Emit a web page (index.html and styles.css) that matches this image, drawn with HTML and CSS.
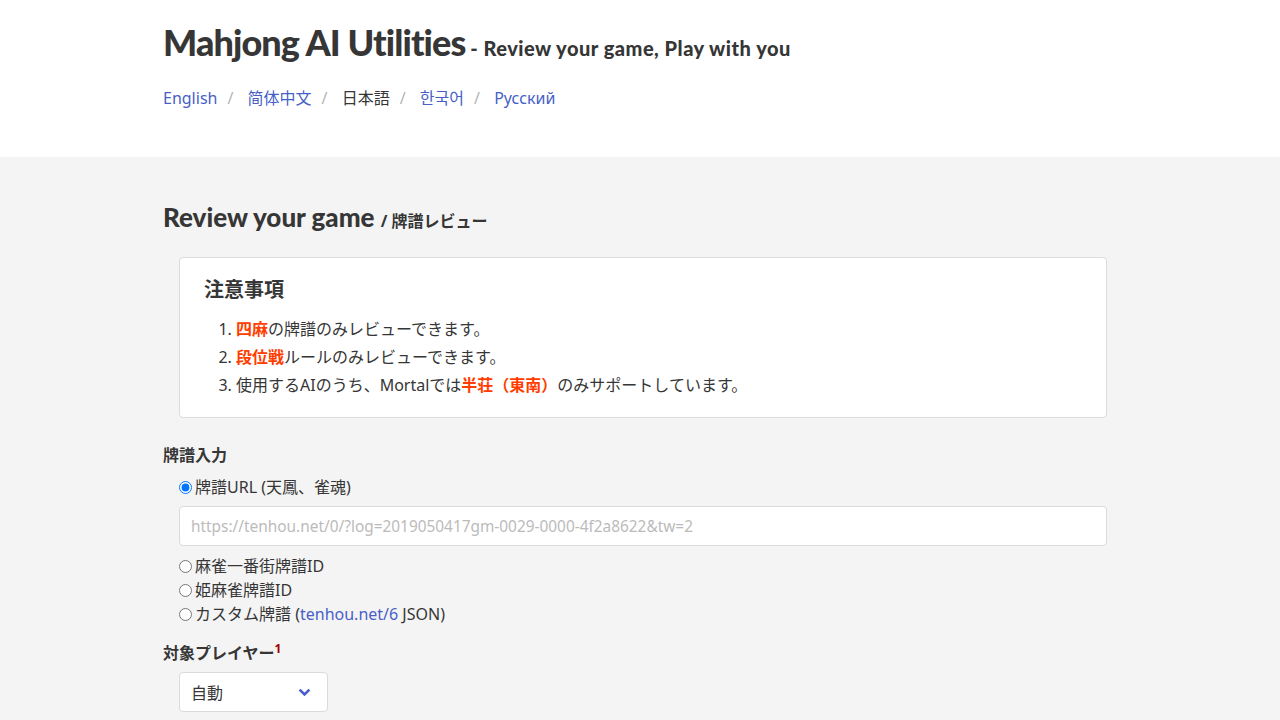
FILE: index.html
```html
<!DOCTYPE html>
<html lang="ja">
<head>
<meta charset="utf-8">
<title>Mahjong AI Utilities</title>
<link rel="stylesheet" href="styles.css">
</head>
<body>
<header class="hero">
  <div class="container">
    <h1 class="title">Mahjong AI Utilities <span class="subtitle">- Review your game, Play with you</span></h1>
    <nav class="langs">
      <a href="#">English</a><span class="sep">/</span>
      <a href="#">简体中文</a><span class="sep">/</span>
      <span class="current">日本語</span><span class="sep">/</span>
      <a href="#">한국어</a><span class="sep">/</span>
      <a href="#">Русский</a>
    </nav>
  </div>
</header>
<main class="section">
  <div class="container">
    <h2 class="section-title">Review your game <span class="small">/ 牌譜レビュー</span></h2>
    <div class="box">
      <h3 class="box-title">注意事項</h3>
      <ol class="notes">
        <li><strong class="hl">四麻</strong>の牌譜のみレビューできます。</li>
        <li><strong class="hl">段位戦</strong>ルールのみレビューできます。</li>
        <li>使用するAIのうち、Mortalでは<strong class="hl">半荘（東南）</strong>のみサポートしています。</li>
      </ol>
    </div>
    <div class="field">
      <div class="label">牌譜入力</div>
      <div class="indent">
        <label class="radio"><input type="radio" name="src" checked><span>牌譜URL (天鳳、雀魂)</span></label>
        <input class="input" type="text" placeholder="https://tenhou.net/0/?log=2019050417gm-0029-0000-4f2a8622&amp;tw=2">
        <label class="radio"><input type="radio" name="src"><span>麻雀一番街牌譜ID</span></label>
        <label class="radio"><input type="radio" name="src"><span>姫麻雀牌譜ID</span></label>
        <label class="radio"><input type="radio" name="src"><span>カスタム牌譜 (<a href="#">tenhou.net/6</a> JSON)</span></label>
      </div>
    </div>
    <div class="field second">
      <div class="label">対象プレイヤー<sup class="ref">1</sup></div>
      <div class="indent">
        <div class="select">
          <span>自動</span>
          <svg class="chev" width="13" height="9" viewBox="0 0 13 9"><path d="M1.6 1.6 L6.5 6.5 L11.4 1.6" fill="none" stroke="#485fc7" stroke-width="2.6"/></svg>
        </div>
      </div>
    </div>
  </div>
</main>
</body>
</html>
```
FILE: styles.css
```css
html, body { margin: 0; padding: 0; }
body {
  font-family: "Noto Sans", "Noto Sans CJK JP", sans-serif;
  font-size: 16px;
  color: #363636;
  background: #f4f4f4;
}
a { color: #485fc7; text-decoration: none; }
.container { width: 954px; margin-left: 163px; }
.hero { background: #fff; padding: 20px 0 47px; }
.title {
  margin: 0;
  font-family: "Lato", "Noto Sans", sans-serif;
  font-weight: 900;
  font-size: 36px;
  line-height: 44px;
  color: #363636;
  letter-spacing: -0.9px;
}
.subtitle { font-size: 20px; font-weight: 900; letter-spacing: 0.5px; margin-left: -3px; }
.langs { margin-top: 16px; line-height: 24px; }
.langs .sep { color: #b5b5b5; margin: 0 10px; }
.section { padding: 42px 0 40px; }
.section-title {
  margin: 0 0 18px;
  font-family: "Lato", "Noto Sans", sans-serif;
  font-weight: 900;
  font-size: 26px;
  line-height: 36px;
}
.section-title .small { font-family: "Noto Sans", "Noto Sans CJK JP", sans-serif; font-size: 16px; font-weight: 700; }
.box {
  margin-left: 16px;
  width: 878px;
  background: #fff;
  border: 1px solid #dcdcdc;
  border-radius: 4px;
  padding: 16px 24px 18px;
}
.box-title { margin: 0 0 9px; font-size: 20px; font-weight: 700; line-height: 32px; }
.notes { margin: 0; padding-left: 32px; line-height: 28px; }
.hl { color: #ff3d00; font-weight: 700; }
.field { margin-top: 25px; }
.field.second { margin-top: 11px; }
.label { font-weight: 700; line-height: 24px; }
.indent { padding-left: 16px; margin-top: 8px; }
.second .indent { margin-top: 7px; }
.radio { display: flex; align-items: center; line-height: 24px; }
.radio input { margin: 0 3px 0 0; width: 13px; height: 13px; }
.input {
  display: block;
  box-sizing: border-box;
  width: 928px;
  height: 40px;
  margin: 7px 0 8px;
  border: 1px solid #dbdbdb;
  border-radius: 4px;
  background: #fff;
  padding: 0 11px;
  font-family: "Noto Sans", "Noto Sans CJK JP", sans-serif;
  font-size: 15.4px;
  color: #363636;
}
.input::placeholder { color: #bbbbbb; }
.ref { color: #a00000; font-size: 12px; }
.select {
  box-sizing: border-box;
  width: 149px;
  height: 40px;
  background: #fff;
  border: 1px solid #dbdbdb;
  border-radius: 4px;
  display: flex;
  align-items: center;
  justify-content: space-between;
  padding: 0 16px 0 11px;
}
```
